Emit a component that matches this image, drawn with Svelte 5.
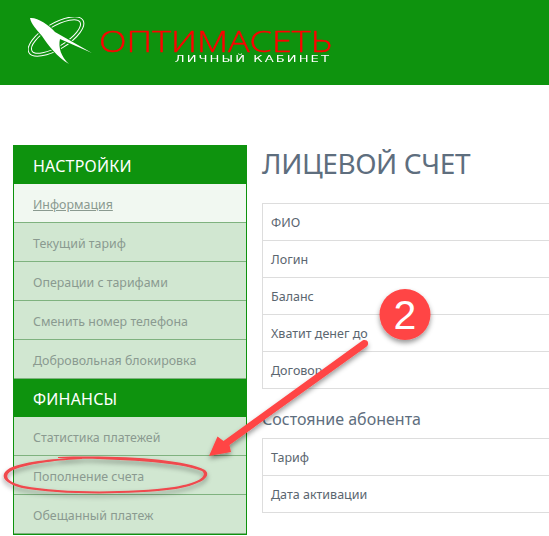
<script>
  const settings = [
    { label: "Информация", active: true },
    { label: "Текущий тариф" },
    { label: "Операции с тарифами" },
    { label: "Сменить номер телефона" },
    { label: "Добровольная блокировка" }
  ];
  const finance = [
    { label: "Статистика платежей" },
    { label: "Пополнение счета" },
    { label: "Обещанный платеж" }
  ];
  const account = ["ФИО", "Логин", "Баланс", "Хватит денег до", "Договор"];
  const status = ["Тариф", "Дата активации"];
</script>

<div class="page">
  <header class="top">
    <div class="logo">
      <svg class="mark" width="70" height="52" viewBox="0 0 70 52" aria-hidden="true">
        <g fill="none" stroke="#fff" stroke-width="1">
          <ellipse cx="28" cy="19.5" rx="31.5" ry="13" transform="rotate(-31 28 19.5)" />
          <ellipse cx="28" cy="19.5" rx="28" ry="10" transform="rotate(-31 28 19.5)" />
        </g>
        <path fill="#fff" stroke="#0e930e" stroke-width="2" paint-order="stroke" d="M2 1 C 9 0 21 8 27 15 L 64 36 L 32 22 C 30 30 33 40 41 47 C 29 40 20 28 14 19 C 9 13 3 7 2 1 Z" />
      </svg>
      <div class="wordmark">
        <span class="brand">ОПТИМАСЕТЬ</span>
        <span class="sub">ЛИЧНЫЙ КАБИНЕТ</span>
      </div>
    </div>
  </header>

  <main class="main">
    <aside class="side">
      <h3>НАСТРОЙКИ</h3>
      {#each settings as item}
        <div class="item" class:active={item.active}><span>{item.label}</span></div>
      {/each}
      <h3 class="second">ФИНАНСЫ</h3>
      {#each finance as item}
        <div class="item"><span>{item.label}</span></div>
      {/each}
    </aside>

    <section class="content">
      <h1>ЛИЦЕВОЙ СЧЕТ</h1>
      <div class="table">
        {#each account as row}
          <div class="row">{row}</div>
        {/each}
      </div>
      <h2>Состояние абонента</h2>
      <div class="table">
        {#each status as row}
          <div class="row">{row}</div>
        {/each}
      </div>
    </section>
  </main>

  <svg class="notes" width="549" height="536" viewBox="0 0 549 536" aria-hidden="true">
    <defs>
      <filter id="shade" x="-20%" y="-20%" width="140%" height="150%">
        <feDropShadow dx="0" dy="3" stdDeviation="2.5" flood-color="#000" flood-opacity="0.4" />
      </filter>
    </defs>
    <g filter="url(#shade)">
      <path fill="#ff4545" d="M362.5 340.5 C 364.5 339.5 367.5 340 368 342.5 C 368.5 345 367 346 366 347 L 229.5 445 L 231 452 L 209 456 L 217.5 436.5 L 223.5 441 Z" />
      <path fill="#f0484e"
        d="M58 457 C 120 455 184 459 205 470 C 212 476 203 484 176 489 C 130 495 58 495 22 488 C 2 483 -1 474 10 468 C 26 461 58 458 82 458 L 82 459 C 60 460 30 463 13 470 C 3 475 6 482 24 486 C 60 493 130 493 174 487 C 199 483 208 476 202 471 C 180 462 120 459 58 458 Z" />
      <circle cx="405" cy="314.5" r="25.5" fill="#ff4545" />
    </g>
    <text class="badge" x="405" y="329" text-anchor="middle">2</text>
  </svg>
</div>

<style>
  :global(body) {
    margin: 0;
    background: #fff;
    overflow: hidden;
  }

  .page {
    position: relative;
    width: 549px;
    height: 536px;
    overflow: hidden;
    font-family: "Noto Sans", "Open Sans", sans-serif;
  }

  .top {
    height: 85px;
    background: #0e930e;
    box-sizing: border-box;
    padding: 16px 0 0 28px;
  }

  .logo {
    display: flex;
    align-items: flex-start;
  }

  .mark {
    flex: none;
    display: block;
    margin-top: 1px;
  }

  .wordmark {
    margin-left: 1px;
    padding-top: 13px;
    width: 232px;
    font-family: "DejaVu Sans", sans-serif;
  }

  .brand {
    display: block;
    color: #f00;
    font-family: "Open Sans", "DejaVu Sans", sans-serif;
    font-size: 29px;
    line-height: 23px;
    font-weight: 300;
    white-space: nowrap;
    transform: scaleX(1.24);
    transform-origin: left;
    -webkit-text-stroke: 0.4px #f00;
  }

  .sub {
    display: block;
    color: #fff;
    font-size: 9.5px;
    line-height: 10px;
    letter-spacing: 1.5px;
    text-align: right;
    white-space: nowrap;
    margin-top: 2px;
    transform: scaleX(1.38);
    transform-origin: right;
  }

  .main {
    display: flex;
    gap: 15px;
    padding: 60px 0 0 13px;
  }

  .side {
    flex: none;
    width: 234px;
    box-sizing: border-box;
    background: #d1e7d1;
    border: 1px solid #0e930e;
    border-top: 0;
  }

  .side h3 {
    margin: 0 -1px;
    height: 39px;
    box-sizing: border-box;
    padding-left: 20px;
    background: #0e930e;
    color: #fff;
    font-size: 16px;
    font-weight: 400;
    letter-spacing: 0.2px;
    line-height: 42px;
  }

  .side h3.second {
    height: 38px;
    line-height: 40px;
  }

  .item {
    height: 39px;
    box-sizing: border-box;
    padding-left: 19px;
    border-bottom: 1px solid #7fb27f;
    color: #8a9a90;
    font-size: 12.4px;
    line-height: 41px;
  }

  .item.active {
    background: #f1f8f1;
    text-decoration: underline;
  }

  .content {
    flex: none;
    width: 340px;
  }

  h1 {
    margin: 0;
    height: 58px;
    color: #5e6e7e;
    font-size: 28px;
    font-weight: 400;
    letter-spacing: -0.4px;
    line-height: 37px;
  }

  h2 {
    margin: 0;
    height: 49px;
    box-sizing: border-box;
    padding-top: 19px;
    color: #5e6e7e;
    font-size: 16px;
    font-weight: 400;
    line-height: 22px;
  }

  .table {
    border: 1px solid #ddd;
    border-bottom: 0;
  }

  .row {
    height: 37px;
    box-sizing: border-box;
    padding-left: 8px;
    border-bottom: 1px solid #ddd;
    color: #5b6670;
    font-size: 12.5px;
    line-height: 37px;
  }

  .notes {
    position: absolute;
    left: 0;
    top: 0;
    pointer-events: none;
  }

  .badge {
    fill: #fff;
    font-family: "Liberation Sans", sans-serif;
    font-size: 41px;
  }
</style>
